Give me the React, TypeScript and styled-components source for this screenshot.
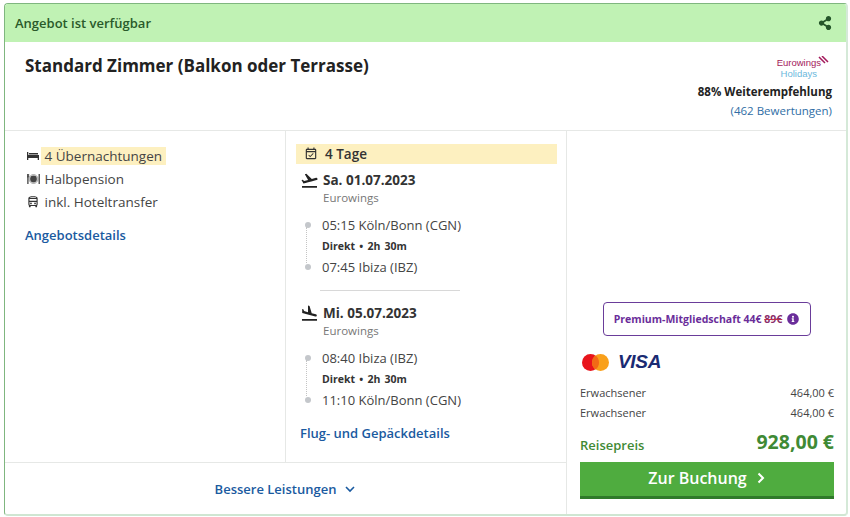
import React from "react";
import styled, { createGlobalStyle } from "styled-components";
import { FaInfoCircle, FaShareAlt } from "react-icons/fa";
import { MdFlightLand, MdFlightTakeoff, MdOutlineDirectionsBus, MdOutlineEventAvailable } from "react-icons/md";

const Global = createGlobalStyle`
  html, body { margin: 0; padding: 0; background: #fff; }
  body { font-family: "Open Sans", sans-serif; color: #333; }
  * { box-sizing: border-box; }
`;
const Page = styled.div`
  width: 850px; height: 517px; padding: 3px 2px 1px 4px;
`;
const Card = styled.div`
  width: 844px; height: 513px; display: flex; flex-direction: column; overflow: hidden;
  border: 1px solid #7fb67f; border-bottom: 2px solid #cfe6d2; border-right: 2px solid #d5e9d8; border-radius: 4px;
`;
const Banner = styled.div`
  height: 38px; flex: none; display: flex; align-items: center; justify-content: space-between;
  background: #c0f2b4; padding: 0 14px 0 10px; color: #2a5a2a; font-size: 13px; font-weight: 600;
`;
const Top = styled.div`
  height: 89px; flex: none; display: flex; justify-content: space-between; padding: 13px 14px 0 20px;
  border-bottom: 1px solid #e6e8e6;
`;
const Title = styled.h2`
  margin: 0; font-size: 17px; line-height: 22px; font-weight: 700; color: #222;
`;
const Operator = styled.div`
  display: flex; flex-direction: column; align-items: flex-end;
`;
const Logo = styled.div`
  position: relative; display: flex; flex-direction: column; align-items: flex-end; padding-right: 1px; margin-top: 1px; height: 24px;
`;
const LogoTop = styled.span`
  font-family: "Liberation Sans", sans-serif; font-size: 9.5px; line-height: 12px; color: #a3195b; padding-right: 10px; padding-top: 1px;
`;
const LogoBottom = styled.span`
  font-family: "Liberation Sans", sans-serif; font-size: 9.5px; line-height: 10px; color: #6bb8dc; padding-right: 14px;
`;
const Stripes = styled.svg`
  position: absolute; right: 3px; top: 0;
`;
const Recommend = styled.div`
  font-size: 11.5px; line-height: 17px; font-weight: 700; color: #222; margin-top: 3px;
`;
const Reviews = styled.div`
  font-size: 11.5px; line-height: 17px; color: #2f6ea5; margin-top: 2px;
`;
const Body = styled.div`
  flex: 1; display: flex; min-height: 0;
`;
const Main = styled.div`
  width: 562px; flex: none; display: flex; flex-direction: column; border-right: 1px solid #e6e8e6;
`;
const Columns = styled.div`
  height: 332px; flex: none; display: flex; border-bottom: 1px solid #e6e8e6;
`;
const Services = styled.div`
  width: 281px; flex: none; padding: 13px 0 0 20px; border-right: 1px solid #e6e8e6;
`;
const Service = styled.div`
  display: flex; align-items: center; height: 23px; font-size: 13.5px; color: #444;
`;
const IconSlot = styled.span`
  width: 16px; display: inline-flex; justify-content: center; align-items: center; margin-right: 0; color: #333; flex: none;
`;
const Mark = styled.span<{ $on?: boolean }>`
  padding: 0 3.5px; height: 18px; line-height: 18px; background: ${p => (p.$on ? "#fdf0c0" : "transparent")};
`;
const DetailLink = styled.a`
  display: block; font-size: 13px; font-weight: 600; color: #1a5aa0; line-height: 18px;
`;
const ServiceLink = styled(DetailLink)`
  margin-top: 13px;
`;
const Trip = styled.div`
  flex: 1; padding: 13px 9px 0 10px;
`;
const Days = styled.div`
  height: 20px; display: flex; align-items: center; background: #fdf0c0; padding-left: 8px; gap: 7px;
  font-size: 13.5px; font-weight: 600; color: #333;
`;
const Leg = styled.div<{ $gap?: number }>`
  margin-top: ${p => p.$gap ?? 0}px; padding-left: 5px;
`;
const LegHead = styled.div`
  display: flex; align-items: center; height: 20px;
`;
const PlaneSlot = styled.span`
  width: 22px; display: inline-flex; margin-right: 0; color: #222; flex: none; margin-left: -1px;
`;
const DateText = styled.span`
  font-size: 13.5px; font-weight: 700; color: #333; margin-left: 1px;
`;
const Airline = styled.div`
  font-size: 11.5px; line-height: 16px; color: #777; margin-left: 22px;
`;
const Stops = styled.div`
  position: relative; margin-top: 9px; padding-left: 21px;
`;
const Rail = styled.span`
  position: absolute; left: 5px; top: 12px; height: 36px; border-left: 1px dotted #c4c4c4;
`;
const Stop = styled.div`
  position: relative; font-size: 13px; line-height: 21px; color: #444;
  &::before { content: ""; position: absolute; left: -17px; top: 7px; width: 6px; height: 6px; border-radius: 50%; background: #c4c7cb; }
`;
const Direct = styled.div`
  font-size: 10.5px; line-height: 21px; font-weight: 700; color: #333; word-spacing: 1.5px;
`;
const Separator = styled.hr`
  width: 140px; margin: 12px 0 0 24px; border: 0; border-top: 1px solid #d8d8d8;
`;
const FlightLink = styled(DetailLink)`
  margin-top: 13px; margin-left: 4px;
`;
const Better = styled.div`
  flex: 1; display: flex; align-items: center; justify-content: center; gap: 8px; padding-bottom: 0;
  font-size: 13px; font-weight: 600; color: #1a5aa0;
`;
const Aside = styled.div`
  flex: 1; display: flex; flex-direction: column; justify-content: flex-end; padding: 0 12px 15px 13px;
`;
const Premium = styled.div`
  align-self: center; width: 208px; height: 34px; margin-left: -1px; display: flex; align-items: center; justify-content: center; gap: 5px;
  border: 1px solid #6a3d9a; border-radius: 4px; font-size: 10.5px; font-weight: 700; color: #6a2d9a;
`;
const Struck = styled.s`
  color: #8a2d6a; text-decoration-color: #c0304a;
`;
const Cards = styled.div`
  display: flex; align-items: center; gap: 8px; margin: 14px 0 9px 1px; height: 24px;
`;
const Visa = styled.span`
  font-family: "Liberation Sans", sans-serif; font-style: italic; font-weight: 700; font-size: 19px; color: #1a2a72; letter-spacing: -0.3px; line-height: 24px;
`;
const Line = styled.div`
  display: flex; justify-content: space-between; font-size: 11px; line-height: 20px; color: #444;
`;
const Total = styled.div`
  display: flex; justify-content: space-between; align-items: flex-end; margin-top: 6px; color: #3f8a35;
`;
const TotalLabel = styled.span`
  font-size: 13px; font-weight: 600; line-height: 20px;
`;
const TotalValue = styled.span`
  font-size: 19.5px; font-weight: 700; line-height: 26px;
`;
const Book = styled.button`
  width: 100%; height: 37px; margin-top: 7px; padding: 0 0 3px; display: flex; align-items: center; justify-content: center; gap: 9px;
  background: #4fac3f; color: #fff; border: 0; border-bottom: 3px solid #2f7a2a; font: 600 16px "Open Sans", sans-serif;
`;

const Bed = () => (
  <svg width="12" height="10" viewBox="0 0 12 10"><path fill="#333" d="M0 1h1.3v3H12v5h-1.3V7H1.3v2H0zM2 3.4V2h9v1.4z" /></svg>
);
const Meal = () => (
  <svg width="13" height="12" viewBox="0 0 13 12"><circle cx="6.5" cy="6" r="3.4" fill="#444" /><circle cx="6.5" cy="6" r="4.4" fill="none" stroke="#777" strokeWidth=".7" /><path stroke="#333" strokeWidth="1.2" d="M.9 1v10M12.2 1v10" /><path stroke="#333" strokeWidth=".7" d="M.1 1v3h1.6V1" fill="none" /></svg>
);
const Chevron = ({ size, width, color }: { size: number; width: number; color: string }) => (
  <svg width={size} height={size} viewBox="0 0 12 12"><path d="M2 4l4 4 4-4" fill="none" stroke={color} strokeWidth={width} /></svg>
);
const ChevronRight = () => (
  <svg width="10" height="12" viewBox="0 0 10 12"><path d="M2.5 1.5L7 6l-4.500 4.500" fill="none" stroke="#fff" strokeWidth="2" /></svg>
);

const Flight = ({ icon, date, from, to, gap }: { icon: React.ReactNode; date: string; from: string; to: string; gap?: number }) => (
  <Leg $gap={gap}>
    <LegHead><PlaneSlot>{icon}</PlaneSlot><DateText>{date}</DateText></LegHead>
    <Airline>Eurowings</Airline>
    <Stops>
      <Rail />
      <Stop>{from}</Stop>
      <Direct>Direkt&nbsp;•&nbsp;2h 30m</Direct>
      <Stop>{to}</Stop>
    </Stops>
  </Leg>
);

export default function App() {
  return (
    <Page>
      <Global />
      <Card>
        <Banner>
          <span>Angebot ist verfügbar</span>
          <FaShareAlt size={14} color="#24552a" />
        </Banner>
        <Top>
          <Title>Standard Zimmer (Balkon oder Terrasse)</Title>
          <Operator>
            <Logo>
              <Stripes width="11" height="8" viewBox="0 0 11 8"><path d="M1 1l6 6M4 0l6 6" stroke="#a3195b" strokeWidth="1.5" /></Stripes>
              <LogoTop>Eurowings</LogoTop>
              <LogoBottom>Holidays</LogoBottom>
            </Logo>
            <Recommend>88% Weiterempfehlung</Recommend>
            <Reviews>(462 Bewertungen)</Reviews>
          </Operator>
        </Top>
        <Body>
          <Main>
            <Columns>
              <Services>
                <Service><IconSlot><Bed /></IconSlot><Mark $on>4 Übernachtungen</Mark></Service>
                <Service><IconSlot><Meal /></IconSlot><Mark>Halbpension</Mark></Service>
                <Service><IconSlot><MdOutlineDirectionsBus size={14} /></IconSlot><Mark>inkl. Hoteltransfer</Mark></Service>
                <ServiceLink>Angebotsdetails</ServiceLink>
              </Services>
              <Trip>
                <Days><MdOutlineEventAvailable size={14} />4 Tage</Days>
                <Flight gap={6} icon={<MdFlightTakeoff size={19} />} date="Sa. 01.07.2023" from="05:15 Köln/Bonn (CGN)" to="07:45 Ibiza (IBZ)" />
                <Separator />
                <Flight gap={12} icon={<MdFlightLand size={19} />} date="Mi. 05.07.2023" from="08:40 Ibiza (IBZ)" to="11:10 Köln/Bonn (CGN)" />
                <FlightLink>Flug- und Gepäckdetails</FlightLink>
              </Trip>
            </Columns>
            <Better>Bessere Leistungen <Chevron size={12} width={1.6} color="#1a5aa0" /></Better>
          </Main>
          <Aside>
            <Premium>
              <span>Premium-Mitgliedschaft 44€ <Struck>89€</Struck></span>
              <FaInfoCircle size={12} color="#6a2d9a" />
            </Premium>
            <Cards>
              <svg width="29" height="19" viewBox="0 0 29 19"><circle cx="9.500" cy="9.500" r="8.500" fill="#e8141c" /><circle cx="19.500" cy="9.500" r="8.500" fill="#f9a01b" /><path d="M14.500 2.600a8.500 8.500 0 0 1 0 13.800a8.500 8.500 0 0 1 0-13.800z" fill="#f26a16" /></svg>
              <Visa>VISA</Visa>
            </Cards>
            <Line><span>Erwachsener</span><span>464,00 €</span></Line>
            <Line><span>Erwachsener</span><span>464,00 €</span></Line>
            <Total><TotalLabel>Reisepreis</TotalLabel><TotalValue>928,00 €</TotalValue></Total>
            <Book>Zur Buchung <ChevronRight /></Book>
          </Aside>
        </Body>
      </Card>
    </Page>
  );
}
